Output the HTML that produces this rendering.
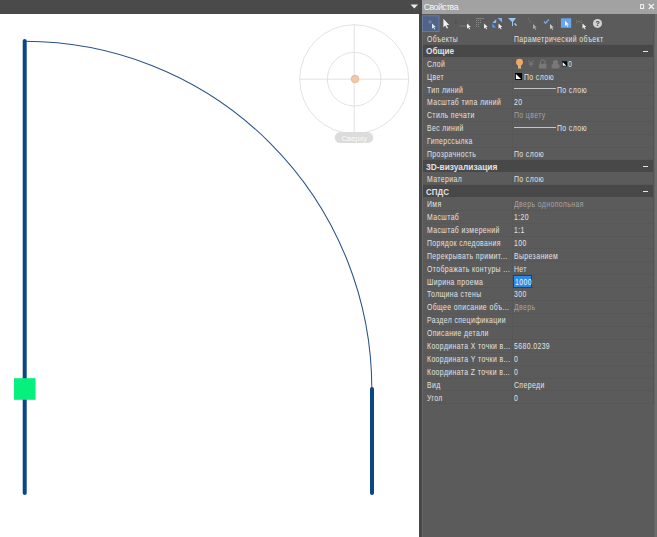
<!DOCTYPE html>
<html><head><meta charset="utf-8">
<style>
html,body{margin:0;padding:0;}
body{width:657px;height:537px;position:relative;overflow:hidden;background:#fff;font-family:"Liberation Sans",sans-serif;}
.abs{position:absolute;}
#topbar{left:0;top:0;width:419px;height:14px;background:#4a4a4a;}
#panel{left:419px;top:0;width:238px;height:537px;background:#5b5b5b;}
#pborder{left:419px;top:0;width:3px;height:537px;background:#474747;border-left:0;}
#pborder2{left:422px;top:14px;width:1px;height:523px;background:#676767;}
#title{left:422px;top:0;width:235px;height:14px;background:#a2a2a2;}
#title span{position:absolute;left:1.8px;top:1.9px;font-size:8.9px;color:#f6f6f6;letter-spacing:-0.6px;}
#toolbar{left:422px;top:14px;width:233px;height:18px;background:#5b5b5b;}
.t{position:absolute;font-size:8.4px;line-height:8.4px;color:#e2e2e2;white-space:nowrap;letter-spacing:0.49px;transform:scaleX(0.82);transform-origin:0 0;}
.t.g{color:#a4a4a4;}
.t.b{font-weight:bold;letter-spacing:0;}
.hb{position:absolute;left:423px;width:230px;background:#484848;}
.gl{position:absolute;left:423px;width:230px;height:1px;background:#575757;}
.dv{position:absolute;left:512px;width:1px;background:#575757;}
.minus{position:absolute;left:643px;width:4.5px;height:1.2px;background:#e6e6e6;}

</style></head>
<body>
<div id="topbar" class="abs"></div>
<!-- triangle on top bar -->
<svg class="abs" style="left:408px;top:0px" width="11" height="12"><polygon points="2.6,4.6 10,4.6 6.3,8.6" fill="#ececec"/></svg>

<!-- drawing -->
<svg class="abs" style="left:0;top:0" width="419" height="537">
  <path d="M24.5,41.3 A347.3,347.3 0 0 1 371.8,388.6" fill="none" stroke="#2a5286" stroke-width="1.05"/>
  <line x1="24.7" y1="41" x2="24.7" y2="493" stroke="#0b4687" stroke-width="4" stroke-linecap="round"/>
  <line x1="372" y1="389" x2="372" y2="493" stroke="#0b4687" stroke-width="4" stroke-linecap="round"/>
  <rect x="14" y="378.2" width="21.6" height="21.6" fill="#05f07c"/>
  <!-- compass -->
  <g stroke="#dadada" stroke-width="0.8" fill="none">
    <circle cx="354.2" cy="79.2" r="54.5"/>
    <circle cx="354.2" cy="79.2" r="26.8"/>
    <line x1="299.7" y1="79.2" x2="408.7" y2="79.2"/>
    <line x1="354.2" y1="24.7" x2="354.2" y2="133.7"/>
  </g>
  <circle cx="355" cy="79" r="3.8" fill="#f1c8a8" stroke="#d8ae92" stroke-width="0.7"/>
  <rect x="334.8" y="132.1" width="38.4" height="11" rx="5.5" fill="#dcdcdc"/>
  <text x="354.3" y="140.9" font-size="7.6" fill="#fbfbfb" text-anchor="middle" font-family="Liberation Sans">Сверху</text>
</svg>

<div id="panel" class="abs"></div>
<div id="pborder" class="abs"></div><div id="pborder2" class="abs"></div>
<div class="abs" style="left:654px;top:14px;width:1px;height:523px;background:#646464"></div><div class="abs" style="left:655px;top:14px;width:2px;height:523px;background:#6c6c6c"></div>
<div class="abs" style="left:653px;top:17px;width:1px;height:387px;background:#545454"></div>
<div id="title" class="abs"><span>Свойства</span></div>
<!-- pin & close -->
<svg class="abs" style="left:638px;top:2px" width="19" height="10">
  <rect x="2.6" y="2.6" width="3" height="3.8" fill="none" stroke="#f4f4f4" stroke-width="1"/>
  <line x1="2.1" y1="6.6" x2="6.1" y2="6.6" stroke="#f4f4f4" stroke-width="0.8"/>
  <path d="M10.8,2 L15.8,7 M15.8,2 L10.8,7" stroke="#f4f4f4" stroke-width="1.2"/>
</svg>
<div id="toolbar" class="abs"></div>
<svg class="abs" style="left:419px;top:13px" width="238" height="20">
  <defs>
    <path id="cur" d="M0,0 L0,5.2 L1.3,4 L2.3,6 L3.1,5.6 L2.1,3.6 L3.8,3.6 Z"/>
  </defs>
  <!-- selected button -->
  <rect x="3.5" y="2.8" width="16.5" height="15.8" fill="#4f6488" stroke="#6e7fa6" stroke-width="0.8"/>
  <path d="M9,9 h4 M11,7 v4" stroke="#7f90b0" stroke-width="0.8"/>
  <use href="#cur" x="13" y="10.5" fill="#dfe8f8"/>
  <!-- big white arrow -->
  <path d="M24.4,5.8 L24.4,14.5 L26.3,12.6 L27.8,15.6 L29,15 L27.6,12.1 L30.2,12.1 Z" fill="#f2f2f2"/>
  <!-- icon3 -->
  <line x1="36.8" y1="6.7" x2="36.8" y2="11" stroke="#4a4a4a" stroke-width="0.8"/>
  <line x1="40.5" y1="13" x2="49" y2="13" stroke="#8a8a8a" stroke-width="0.7"/>
  <path d="M49.3,7 v6" stroke="#8a8a8a" stroke-width="0.7" stroke-dasharray="1,1"/>
  <use href="#cur" x="48" y="10.5" fill="#f0f0f0"/>
  <!-- icon4 grid -->
  <g fill="#8c8c8c">
    <rect x="57" y="5.2" width="8" height="0.8"/>
    <rect x="57" y="7" width="1" height="1"/><rect x="59" y="7" width="1" height="1"/><rect x="61" y="7" width="1" height="1"/>
    <rect x="57" y="9" width="1" height="1"/><rect x="59" y="9" width="1" height="1"/><rect x="61" y="9" width="1" height="1"/>
    <rect x="57" y="11" width="1" height="1"/><rect x="59" y="11" width="1" height="1"/>
    <rect x="57" y="13" width="1" height="1"/><rect x="59" y="13" width="1" height="1"/>
  </g>
  <use href="#cur" x="65" y="10.5" fill="#f0f0f0"/>
  <!-- icon5 blue triangles -->
  <polygon points="77.2,6 73.3,10 77.2,10" fill="#8fb6ee"/>
  <polygon points="73.3,10.5 77.2,14.5 73.3,14.5" fill="#5a9ae8"/>
  <polygon points="78.5,5 83,5 83,9.5" fill="#7fb0ea"/>
  <use href="#cur" x="79.5" y="10.5" fill="#f4f4f4"/>
  <!-- icon6 filter -->
  <polygon points="89,5 97,5 94,9 94,13 93,13 93,9" fill="#9cc6f2"/>
  <path d="M95,11 h2 v2" stroke="#e8e8e8" stroke-width="0.8" fill="none"/>
  <!-- separator -->
  <line x1="103" y1="5" x2="103" y2="15" stroke="#616161" stroke-width="0.8"/>
  <!-- icon7 -->
  <path d="M109,5 L112,10" stroke="#858585" stroke-width="0.8" stroke-dasharray="1,0.8"/>
  <use href="#cur" x="114" y="11" fill="#a8a8a8"/>
  <!-- icon8 check -->
  <path d="M125,8.5 L126.5,10.2 L129.8,6.5" stroke="#7fa8e6" stroke-width="1.3" fill="none"/>
  <use href="#cur" x="131" y="11" fill="#c8c8c8"/>
  <!-- separator -->
  <line x1="137.8" y1="5" x2="137.8" y2="15" stroke="#4c4c4c" stroke-width="0.7"/>
  <line x1="138.4" y1="5" x2="138.4" y2="15" stroke="#6e6e6e" stroke-width="0.6"/>
  <!-- blue square -->
  <rect x="141.9" y="5.3" width="10.3" height="9.5" fill="#6aa6ee"/>
  <use href="#cur" x="146" y="7.8" fill="#f4f6fa"/>
  <!-- dotted ellipse -->
  <path d="M157,7.5 L163,9.8 M157,9.8 L163,7.5" stroke="#8f8a6e" stroke-width="0.8" stroke-dasharray="1,0.8"/>
  <use href="#cur" x="163.5" y="10.5" fill="#f0f0f0"/>
  <!-- help -->
  <circle cx="178.5" cy="10.4" r="4.5" fill="#d4d4d4"/>
  <text x="178.5" y="13.3" font-size="7.5" font-weight="bold" fill="#3a3a3a" text-anchor="middle" font-family="Liberation Sans">?</text>
</svg>

<div id="rows">
<div class="gl" style="top:43.90px"></div>
<div class="dv" style="top:32.20px;height:12.70px"></div>
<span class="t" style="left:427px;top:35.20px">Объекты</span>
<span class="t" style="left:514px;top:35.20px">Параметрический объект</span>
<div class="hb" style="top:44.90px;height:11.93px"></div>
<span class="t b" style="left:426px;top:47.10px;transform:scaleX(0.98)">Общие</span>
<div class="minus" style="top:50.50px"></div>
<div class="gl" style="top:69.57px"></div>
<div class="dv" style="top:57.73px;height:12.83px"></div>
<span class="t" style="left:427px;top:59.93px">Слой</span>
<svg class="abs" style="left:513px;top:57.73px" width="70" height="13"><circle cx="6.5" cy="4.2" r="3.4" fill="#f2a862"/><rect x="5" y="7" width="3" height="3.6" fill="#c8b98e"/><g stroke="#7c7c7c" stroke-width="1" fill="none"><path d="M15.5,2.5 L18,5.5 L20.5,2.5 M18,5.5 V8.5 M15.5,6 H20.5"/></g><path d="M27.5,6 v-1.8 a2.3,2.3 0 0 1 4.6,0 v1.8" stroke="#7a7a7a" stroke-width="1" fill="none"/><rect x="26" y="5.8" width="7.5" height="4.8" rx="0.5" fill="#787878"/><circle cx="42.5" cy="4.6" r="2.6" fill="#787878"/><rect x="38.5" y="6" width="8" height="4.5" rx="1.5" fill="#787878"/><rect x="49" y="3.3" width="5" height="5" fill="#000"/><polygon points="49.6,4 53.4,7.8 49.6,7.8" fill="#fff"/></svg>
<span class="t" style="left:568px;top:59.93px">0</span>
<div class="gl" style="top:82.40px"></div>
<div class="dv" style="top:70.57px;height:12.83px"></div>
<span class="t" style="left:427px;top:72.77px">Цвет</span>
<svg class="abs" style="left:514.5px;top:72.77px" width="7" height="7"><rect x="0" y="0" width="7" height="7" fill="#000"/><polygon points="0.9,0.9 6.1,6.1 0.9,6.1" fill="#fff"/></svg>
<span class="t" style="left:524px;top:72.77px">По слою</span>
<div class="gl" style="top:95.23px"></div>
<div class="dv" style="top:83.40px;height:12.83px"></div>
<span class="t" style="left:427px;top:85.60px">Тип линий</span>
<div class="abs" style="left:514px;top:88.20px;width:42px;height:1px;background:#c4c4c4"></div>
<span class="t" style="left:557px;top:85.60px">По слою</span>
<div class="gl" style="top:108.07px"></div>
<div class="dv" style="top:96.23px;height:12.83px"></div>
<span class="t" style="left:427px;top:98.43px">Масштаб типа линий</span>
<span class="t" style="left:514px;top:98.43px">20</span>
<div class="gl" style="top:120.90px"></div>
<div class="dv" style="top:109.07px;height:12.83px"></div>
<span class="t" style="left:427px;top:111.27px">Стиль печати</span>
<span class="t g" style="left:514px;top:111.27px">По цвету</span>
<div class="gl" style="top:133.73px"></div>
<div class="dv" style="top:121.90px;height:12.83px"></div>
<span class="t" style="left:427px;top:124.10px">Вес линий</span>
<div class="abs" style="left:514px;top:126.70px;width:42px;height:1px;background:#c4c4c4"></div>
<span class="t" style="left:557px;top:124.10px">По слою</span>
<div class="gl" style="top:146.57px"></div>
<div class="dv" style="top:134.73px;height:12.83px"></div>
<span class="t" style="left:427px;top:136.93px">Гиперссылка</span>
<div class="gl" style="top:159.40px"></div>
<div class="dv" style="top:147.57px;height:12.83px"></div>
<span class="t" style="left:427px;top:149.77px">Прозрачность</span>
<span class="t" style="left:514px;top:149.77px">По слою</span>
<div class="hb" style="top:160.40px;height:11.60px"></div>
<span class="t b" style="left:426px;top:162.60px;transform:scaleX(1.0)">3D-визуализация</span>
<div class="minus" style="top:166.00px"></div>
<div class="gl" style="top:184.40px"></div>
<div class="dv" style="top:172.90px;height:12.50px"></div>
<span class="t" style="left:427px;top:175.10px">Материал</span>
<span class="t" style="left:514px;top:175.10px">По слою</span>
<div class="hb" style="top:185.40px;height:11.50px"></div>
<span class="t b" style="left:426px;top:187.60px;transform:scaleX(0.95)">СПДС</span>
<div class="minus" style="top:191.00px"></div>
<div class="gl" style="top:209.72px"></div>
<div class="dv" style="top:197.80px;height:12.92px"></div>
<span class="t" style="left:427px;top:200.00px">Имя</span>
<span class="t g" style="left:514px;top:200.00px">Дверь однопольная</span>
<div class="gl" style="top:222.63px"></div>
<div class="dv" style="top:210.72px;height:12.92px"></div>
<span class="t" style="left:427px;top:212.92px">Масштаб</span>
<span class="t" style="left:514px;top:212.92px">1:20</span>
<div class="gl" style="top:235.55px"></div>
<div class="dv" style="top:223.63px;height:12.92px"></div>
<span class="t" style="left:427px;top:225.83px">Масштаб измерений</span>
<span class="t" style="left:514px;top:225.83px">1:1</span>
<div class="gl" style="top:248.47px"></div>
<div class="dv" style="top:236.55px;height:12.92px"></div>
<span class="t" style="left:427px;top:238.75px">Порядок следования</span>
<span class="t" style="left:514px;top:238.75px">100</span>
<div class="gl" style="top:261.38px"></div>
<div class="dv" style="top:249.47px;height:12.92px"></div>
<span class="t" style="left:427px;top:251.67px">Перекрывать примит...</span>
<span class="t" style="left:514px;top:251.67px">Вырезанием</span>
<div class="gl" style="top:274.30px"></div>
<div class="dv" style="top:262.38px;height:12.92px"></div>
<span class="t" style="left:427px;top:264.58px">Отображать контуры ...</span>
<span class="t" style="left:514px;top:264.58px">Нет</span>
<div class="gl" style="top:287.21px"></div>
<div class="dv" style="top:275.30px;height:12.91px"></div>
<span class="t" style="left:427px;top:277.50px">Ширина проема</span>
<div class="abs" style="left:512.6px;top:275.40px;width:19.4px;height:12.2px;background:#3c3c3c"></div>
<div class="abs" style="left:513.5px;top:275.90px;width:17.5px;height:10.8px;background:#2a8ae6"></div>
<span class="t" style="left:514.5px;top:277.50px;color:#f4faff">1000</span>
<div class="gl" style="top:300.12px"></div>
<div class="dv" style="top:288.21px;height:12.91px"></div>
<span class="t" style="left:427px;top:290.41px">Толщина стены</span>
<span class="t" style="left:514px;top:290.41px">300</span>
<div class="gl" style="top:313.03px"></div>
<div class="dv" style="top:301.12px;height:12.91px"></div>
<span class="t" style="left:427px;top:303.32px">Общее описание объ...</span>
<span class="t g" style="left:514px;top:303.32px">Дверь</span>
<div class="gl" style="top:325.94px"></div>
<div class="dv" style="top:314.03px;height:12.91px"></div>
<span class="t" style="left:427px;top:316.23px">Раздел спецификации</span>
<div class="gl" style="top:338.85px"></div>
<div class="dv" style="top:326.94px;height:12.91px"></div>
<span class="t" style="left:427px;top:329.14px">Описание детали</span>
<div class="gl" style="top:351.76px"></div>
<div class="dv" style="top:339.85px;height:12.91px"></div>
<span class="t" style="left:427px;top:342.05px">Координата X точки в...</span>
<span class="t" style="left:514px;top:342.05px">5680.0239</span>
<div class="gl" style="top:364.67px"></div>
<div class="dv" style="top:352.76px;height:12.91px"></div>
<span class="t" style="left:427px;top:354.96px">Координата Y точки в...</span>
<span class="t" style="left:514px;top:354.96px">0</span>
<div class="gl" style="top:377.58px"></div>
<div class="dv" style="top:365.67px;height:12.91px"></div>
<span class="t" style="left:427px;top:367.87px">Координата Z точки в...</span>
<span class="t" style="left:514px;top:367.87px">0</span>
<div class="gl" style="top:390.49px"></div>
<div class="dv" style="top:378.58px;height:12.91px"></div>
<span class="t" style="left:427px;top:380.78px">Вид</span>
<span class="t" style="left:514px;top:380.78px">Спереди</span>
<div class="gl" style="top:403.40px"></div>
<div class="dv" style="top:391.49px;height:12.91px"></div>
<span class="t" style="left:427px;top:393.69px">Угол</span>
<span class="t" style="left:514px;top:393.69px">0</span>
</div>
</body></html>
